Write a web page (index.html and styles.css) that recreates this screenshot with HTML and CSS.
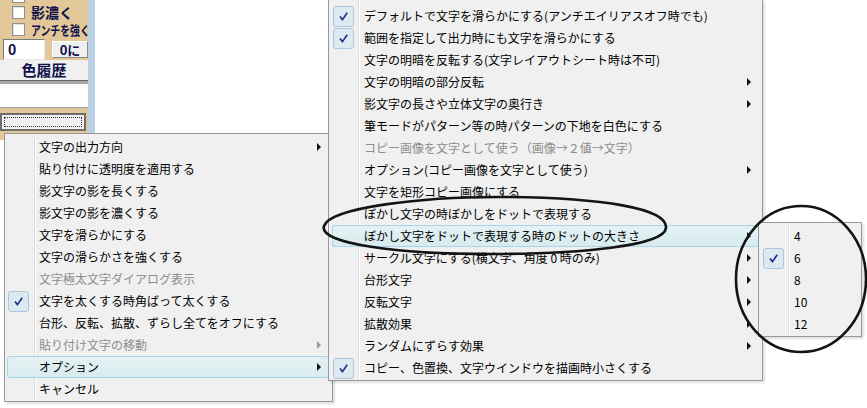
FILE: index.html
```html
<!DOCTYPE html>
<html lang="ja">
<head>
<meta charset="utf-8">
<link rel="stylesheet" href="styles.css">
</head>
<body>
<div class="desk">
  <div class="panel">
    <div class="cut"><span class="cb"></span></div>
    <div class="chk"><span class="cb"></span><span class="lbl">影濃く</span></div>
    <div class="chk"><span class="cb"></span><span class="lbl narrow">アンチを強く</span></div>
    <div class="numrow"><span class="num">0</span><span class="btn0">0に</span></div>
    <div class="hist">色履歴</div>
    <div class="well"></div>
    <div class="bigbtn"><span class="focus"></span></div>
  </div>
  <div class="strip"></div>
  <div class="blank"></div>
</div>

<div class="menu m1">
  <div class="item"><span class="g"></span><span class="t">文字の出力方向</span><span class="arr"></span></div>
  <div class="item"><span class="g"></span><span class="t">貼り付けに透明度を適用する</span><span></span></div>
  <div class="item"><span class="g"></span><span class="t">影文字の影を長くする</span><span></span></div>
  <div class="item"><span class="g"></span><span class="t">影文字の影を濃くする</span><span></span></div>
  <div class="item"><span class="g"></span><span class="t">文字を滑らかにする</span><span></span></div>
  <div class="item"><span class="g"></span><span class="t">文字の滑らかさを強くする</span><span></span></div>
  <div class="item dis"><span class="g"></span><span class="t">文字極太文字ダイアログ表示</span><span></span></div>
  <div class="item"><span class="g"><span class="ck"><svg width="9" height="9" viewBox="0 0 9 9"><path d="M1 4.6 L3.4 7.6 L8.2 0.8" fill="none" stroke="#1C2A8C" stroke-width="1.6"/></svg></span></span><span class="t">文字を太くする時角ばって太くする</span><span></span></div>
  <div class="item"><span class="g"></span><span class="t">台形、反転、拡散、ずらし全てをオフにする</span><span></span></div>
  <div class="item dis"><span class="g"></span><span class="t">貼り付け文字の移動</span><span class="arr"></span></div>
  <div class="item hl"><span class="g"></span><span class="t">オプション</span><span class="arr"></span></div>
  <div class="item"><span class="g"></span><span class="t">キャンセル</span><span></span></div>
</div>

<div class="menu m2">
  <div class="item"><span class="g"><span class="ck"><svg width="9" height="9" viewBox="0 0 9 9"><path d="M1 4.6 L3.4 7.6 L8.2 0.8" fill="none" stroke="#1C2A8C" stroke-width="1.6"/></svg></span></span><span class="t">デフォルトで文字を滑らかにする(アンチエイリアスオフ時でも)</span><span></span></div>
  <div class="item"><span class="g"><span class="ck"><svg width="9" height="9" viewBox="0 0 9 9"><path d="M1 4.6 L3.4 7.6 L8.2 0.8" fill="none" stroke="#1C2A8C" stroke-width="1.6"/></svg></span></span><span class="t">範囲を指定して出力時にも文字を滑らかにする</span><span></span></div>
  <div class="item"><span class="g"></span><span class="t">文字の明暗を反転する(文字レイアウトシート時は不可)</span><span></span></div>
  <div class="item"><span class="g"></span><span class="t">文字の明暗の部分反転</span><span class="arr"></span></div>
  <div class="item"><span class="g"></span><span class="t">影文字の長さや立体文字の奥行き</span><span class="arr"></span></div>
  <div class="item"><span class="g"></span><span class="t">筆モードがパターン等の時パターンの下地を白色にする</span><span></span></div>
  <div class="item dis"><span class="g"></span><span class="t">コピー画像を文字として使う（画像→２値→文字）</span><span></span></div>
  <div class="item"><span class="g"></span><span class="t">オプション(コピー画像を文字として使う)</span><span class="arr"></span></div>
  <div class="item"><span class="g"></span><span class="t">文字を矩形コピー画像にする</span><span></span></div>
  <div class="item"><span class="g"></span><span class="t">ぼかし文字の時ぼかしをドットで表現する</span><span></span></div>
  <div class="item hl"><span class="g"></span><span class="t">ぼかし文字をドットで表現する時のドットの大きさ</span><span class="arr"></span></div>
  <div class="item"><span class="g"></span><span class="t">サークル文字にする(横文字、角度 0 時のみ)</span><span class="arr"></span></div>
  <div class="item"><span class="g"></span><span class="t">台形文字</span><span class="arr"></span></div>
  <div class="item"><span class="g"></span><span class="t">反転文字</span><span class="arr"></span></div>
  <div class="item"><span class="g"></span><span class="t">拡散効果</span><span class="arr"></span></div>
  <div class="item"><span class="g"></span><span class="t">ランダムにずらす効果</span><span class="arr"></span></div>
  <div class="item"><span class="g"><span class="ck"><svg width="9" height="9" viewBox="0 0 9 9"><path d="M1 4.6 L3.4 7.6 L8.2 0.8" fill="none" stroke="#1C2A8C" stroke-width="1.6"/></svg></span></span><span class="t">コピー、色置換、文字ウインドウを描画時小さくする</span><span></span></div>
</div>

<div class="menu m3">
  <div class="item"><span class="g"></span><span class="t">4</span><span></span></div>
  <div class="item"><span class="g"><span class="ck"><svg width="9" height="9" viewBox="0 0 9 9"><path d="M1 4.6 L3.4 7.6 L8.2 0.8" fill="none" stroke="#1C2A8C" stroke-width="1.6"/></svg></span></span><span class="t">6</span><span></span></div>
  <div class="item"><span class="g"></span><span class="t">8</span><span></span></div>
  <div class="item"><span class="g"></span><span class="t">10</span><span></span></div>
  <div class="item"><span class="g"></span><span class="t">12</span><span></span></div>
</div>

<svg class="marks" width="867" height="408" viewBox="0 0 867 408">
  <path d="M324 226 C 330 208, 420 196, 510 197 C 600 198, 668 208, 666 228 C 664 246, 580 254, 490 254 C 400 254, 318 244, 324 226 Z" fill="none" stroke="#141414" stroke-width="2.6"/>
  <ellipse cx="801" cy="279" rx="65" ry="73" fill="none" stroke="#141414" stroke-width="2.6"/>
</svg>
</body>
</html>
```

FILE: styles.css
```css
* { box-sizing: border-box; }
html, body { margin: 0; padding: 0; }
body {
  width: 867px;
  height: 408px;
  overflow: hidden;
  position: relative;
  background: #fff;
  font-family: "Noto Sans CJK JP", "Noto Sans", sans-serif;
}

.desk { display: flex; height: 140px; }
.panel {
  width: 88px;
  background: #E2C899;
  overflow: hidden;
  display: flex;
  flex-direction: column;
  color: #10104A;
  font-weight: bold;
}
.strip { width: 7px; background: #B9CFE4; }
.blank { flex: 1; background: #fff; }

.cut { height: 4px; padding-left: 12px; overflow: hidden; }
.cut .cb { display: block; margin-top: -10px; }
.cb {
  width: 13px;
  height: 13px;
  flex: none;
  background: #fff;
  border: 1px solid #8F8F8F;
  box-shadow: inset 1px 1px 0 #E4E4E4;
}
.chk {
  display: flex;
  align-items: center;
  gap: 6px;
  height: 17px;
  padding-left: 12px;
  font-size: 14px;
  line-height: 17px;
  white-space: nowrap;
}
.lbl { display: inline-block; }
.narrow {
  font-size: 13px;
  transform: scaleX(0.76);
  transform-origin: left center;
}
.numrow { display: flex; align-items: center; height: 22px; }
.num {
  margin-left: 3px;
  width: 42px;
  height: 21px;
  background: #fff;
  border: 1px solid;
  border-color: #7A7A7A #E6E6E6 #E6E6E6 #7A7A7A;
  font-size: 14px;
  line-height: 19px;
  padding-left: 4px;
}
.btn0 {
  margin-left: 7px;
  width: 36px;
  height: 17px;
  background: #F0F0F0;
  border: 1px solid;
  border-color: #fff #8A8A8A #8A8A8A #fff;
  font-size: 13px;
  line-height: 15px;
  text-align: center;
}
.hist {
  height: 21px;
  background: #F0F0F0;
  border-bottom: 1px solid #6A6A6A;
  text-align: center;
  font-size: 15px;
  line-height: 20px;
}
.well {
  height: 27px;
  background: #fff;
  border-top: 3px solid #A8A8A8;
  border-bottom: 1px solid #A0A0A0;
}
.bigbtn {
  margin: 5px 2px 0 0;
  height: 18px;
  background: #F0F0F0;
  border: 2px solid #6E6E6E;
  padding: 2px 2px;
}
.focus {
  display: block;
  height: 100%;
  border: 1px dotted #333;
}

.menu {
  position: absolute;
  background-color: #F0F0F0;
  background-image: linear-gradient(to right, transparent 29px, #DCDDDD 29px, #DCDDDD 30px, #fff 30px, #fff 31px, transparent 31px);
  border: 1px solid #979797;
  padding: 2px 0 1px;
  font-size: 12px;
  color: #000;
  box-shadow: 2px 2px 2px rgba(0,0,0,0.12);
}
.m1 { left: 4px; top: 133px; width: 329px; height: 269px; z-index: 1; }
.m2 { left: 328px; top: -1px; width: 435px; height: 382px; padding-top: 5px; z-index: 2; }
.m3 { left: 758px; top: 222px; width: 104px; height: 115px; z-index: 3; }

.item {
  display: grid;
  grid-template-columns: 32px 1fr 12px;
  align-items: center;
  height: 22px;
  margin: 0 3px 0 2px;
  white-space: nowrap;
  border-radius: 3px;
}
.m2 .item, .m3 .item { margin-left: 3px; }
.item .t { line-height: 22px; overflow: hidden; }
.item.hl {
  background: linear-gradient(#E5F2F4, #D7EBEE);
  box-shadow: inset 0 0 0 1px #A6D6E8;
}
.item.dis { color: #8D8D8D; }
.g {
  height: 22px;
  display: flex;
  align-items: center;
  padding-left: 1px;
}
.ck {
  width: 21px;
  height: 21px;
  border: 1px solid #AFC6DA;
  border-radius: 3px;
  background: #DCE9F1;
  display: flex;
  align-items: center;
  justify-content: center;
}
.arr {
  width: 0;
  height: 0;
  border-left: 4px solid #111;
  border-top: 4px solid transparent;
  border-bottom: 4px solid transparent;
}
.dis .arr { border-left-color: #9A9A9A; }

.marks {
  position: absolute;
  left: 0;
  top: 0;
  z-index: 10;
  pointer-events: none;
}
```
